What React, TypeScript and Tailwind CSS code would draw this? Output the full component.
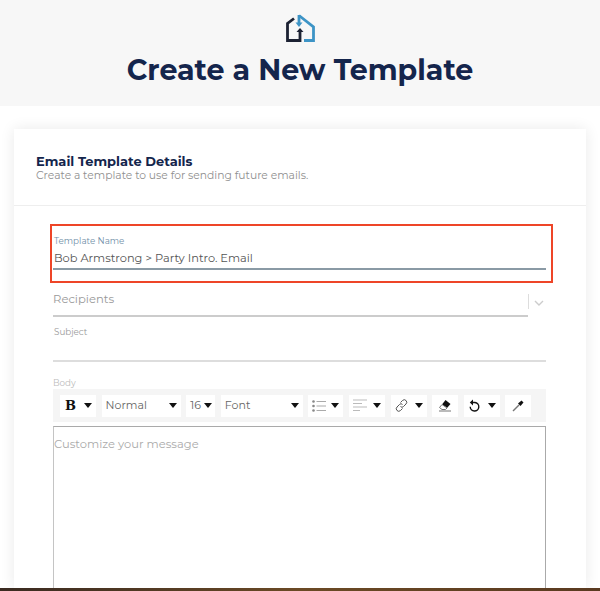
import { ReactNode } from "react";

const font = "font-['Montserrat','Inter','Noto_Sans',sans-serif]";

function Caret() {
  return (
    <svg width="8" height="5" viewBox="0 0 8 5" className="shrink-0">
      <path d="M0 0h8L4 5z" fill="#111" />
    </svg>
  );
}

function ToolBtn({
  w,
  children,
  caret = true,
  gap = "justify-between",
}: {
  w: string;
  children: ReactNode;
  caret?: boolean;
  gap?: string;
}) {
  return (
    <div className={`flex h-[22px] items-center bg-white px-[4px] ${gap} ${w}`}>
      {children}
      {caret && <Caret />}
    </div>
  );
}

function Logo() {
  return (
    <svg width="31" height="30" viewBox="284 13 31 30" fill="none">
      <path d="M293 18.5 L286.5 23.5 V40.5 H299 V30" stroke="#1c2233" strokeWidth="2.8" />
      <path d="M295.5 32 L299 28 L302.5 32 Z" fill="#1c2233" />
      <path d="M298 15 V24" stroke="#3d94c6" strokeWidth="2.8" />
      <path d="M294.5 22.5 L298 27 L301.5 22.5 Z" fill="#3d94c6" />
      <path d="M298 15.5 L312.5 27 V40.5 H303" stroke="#3d94c6" strokeWidth="2.8" />
    </svg>
  );
}

function ListIcon() {
  return (
    <svg width="14" height="12" viewBox="0 0 14 12" fill="none">
      <circle cx="1.5" cy="1.5" r="1.3" fill="#888" />
      <circle cx="1.5" cy="6" r="1.3" fill="#888" />
      <circle cx="1.5" cy="10.5" r="1.3" fill="#888" />
      <path d="M4.5 1.5H14M4.5 6H14M4.5 10.5H14" stroke="#aaa" />
    </svg>
  );
}

function AlignIcon() {
  return (
    <svg width="14" height="13" viewBox="0 0 14 13" fill="none">
      <path d="M0 1H14M0 4.5H9M0 8H14M0 11.5H7" stroke="#bbb" />
    </svg>
  );
}

function LinkIcon() {
  return (
    <svg width="13" height="13" viewBox="0 0 13 13" fill="none" stroke="#555">
      <path d="M5.5 3.5 L7.5 1.5 a2 2 0 0 1 3.5 3.5 L8.5 7.5 a2 2 0 0 1 -3 0" />
      <path d="M7.5 9.5 L5.5 11.5 a2 2 0 0 1 -3.5 -3.5 L4.5 5.5 a2 2 0 0 1 3 0" />
    </svg>
  );
}

function EraserIcon() {
  return (
    <svg width="14" height="13" viewBox="0 0 14 13" fill="none">
      <path d="M7.5 1 L12.5 5 L9 9 L4 5.5 Z" fill="#111" />
      <path d="M4 5.5 L9 9 L7.5 10.5 H4 L1.5 8.5 Z" fill="#fff" stroke="#777" />
      <path d="M1 12H13" stroke="#777" />
    </svg>
  );
}

function UndoIcon() {
  return (
    <svg width="13" height="13" viewBox="0 0 13 13" fill="none">
      <path d="M3.5 3.5 H7 a4.3 4.3 0 1 1 -4.8 4.3" stroke="#111" strokeWidth="1.4" />
      <path d="M5 0.5 L1.8 3.5 L5 6.5 Z" fill="#111" />
    </svg>
  );
}

function PenIcon() {
  return (
    <svg width="12" height="12" viewBox="0 0 12 12" fill="none">
      <path d="M1 11 L7 5" stroke="#777" strokeWidth="1.5" />
      <path d="M6 3.5 L8.5 6 L11.5 2.5 L9.5 0.5 Z" fill="#111" />
    </svg>
  );
}

export default function App() {
  return (
    <main className={`flex h-[591px] flex-col overflow-hidden bg-white ${font}`}>
      {/* Header */}
      <header className="flex h-[106px] shrink-0 flex-col items-center bg-[#f7f7f7] pt-[13px]">
        <Logo />
        <h1 className="mt-[9px] text-[28.5px] leading-[36px] font-bold text-[#14254c]">
          Create a New Template
        </h1>
      </header>

      {/* Card */}
      <section className="mx-[14px] mt-[23px] flex min-h-0 flex-1 flex-col bg-white shadow-[0_0_14px_rgba(0,0,0,0.09)]">
        <div className="h-[77px] shrink-0 border-b border-[#eeeeee] pt-[25px] pl-[22px]">
          <h2 className="text-[13px] leading-[15px] font-bold text-[#14254c]">
            Email Template Details
          </h2>
          <p className="text-[10.75px] leading-[14px] text-[#8f8f8f]">
            Create a template to use for sending future emails.
          </p>
        </div>

        <div className="flex min-h-0 flex-1 flex-col pt-[18px] pr-[40px] pl-[39px]">
          {/* Template name, marked in red */}
          <div className="-mr-[7px] -ml-[3px] h-[59px] shrink-0 border-2 border-[#ee4528] pt-[10px] pr-[5px] pl-[1px]">
            <label className="block pl-px text-[8.75px] leading-[11px] text-[#6f8ea8]">
              Template Name
            </label>
            <div className="h-[23px] border-b-2 border-[#8a9aa5] pt-[3px] pl-px text-[11.4px] leading-[16px] text-[#555555]">
              {"Bob Armstrong > Party Intro. Email"}
            </div>
          </div>

          {/* Recipients */}
          <div className="mt-[5px] flex h-[29px] shrink-0">
            <div className="flex-1 border-b-2 border-[#cccccc] pt-[3px] text-[11.6px] leading-[16px] text-[#999999]">
              Recipients
            </div>
            <div className="flex h-[27px] w-[18px] items-start pt-[6px]">
              <div className="mr-[5px] h-[15px] w-px bg-[#dddddd]" />
              <svg width="10" height="6" viewBox="0 0 10 6" fill="none" className="mt-[6px]">
                <path d="M1 1 L5 5 L9 1" stroke="#cccccc" strokeWidth="1.4" />
              </svg>
            </div>
          </div>

          {/* Subject */}
          <div className="mt-[9px] h-[36px] shrink-0 border-b-2 border-[#dddddd]">
            <label className="block pl-px text-[8.75px] leading-[12px] text-[#999999]">
              Subject
            </label>
          </div>

          {/* Body */}
          <label className="mt-[16px] block shrink-0 text-[8.75px] leading-[11px] text-[#bbbbbb]">
            Body
          </label>
          <div className="flex h-[33px] shrink-0 items-center gap-[5.6px] bg-[#f5f5f5] pl-[7px] text-[11px] text-[#666666]">
            <ToolBtn w="w-[36px]">
              <span className="ml-[1px] font-['DejaVu_Serif',serif] text-[13px] font-bold text-[#111111]">B</span>
            </ToolBtn>
            <ToolBtn w="w-[79px]">
              <span>Normal</span>
            </ToolBtn>
            <ToolBtn w="w-[29px]" gap="gap-[3px]">
              <span>16</span>
            </ToolBtn>
            <ToolBtn w="w-[82px]">
              <span>Font</span>
            </ToolBtn>
            <ToolBtn w="w-[35px]">
              <ListIcon />
            </ToolBtn>
            <ToolBtn w="w-[36px]">
              <AlignIcon />
            </ToolBtn>
            <ToolBtn w="w-[36px]">
              <LinkIcon />
            </ToolBtn>
            <ToolBtn w="w-[26px]" caret={false} gap="justify-center">
              <EraserIcon />
            </ToolBtn>
            <ToolBtn w="w-[36px]">
              <UndoIcon />
            </ToolBtn>
            <ToolBtn w="w-[26px]" caret={false} gap="justify-center">
              <PenIcon />
            </ToolBtn>
          </div>

          {/* Editor */}
          <div className="mt-[4px] min-h-0 flex-1 border border-b-0 border-[#aaaaaa] border-l-[#c4c4c4] pt-[9px] text-[11.5px] leading-[16px] text-[#aaaaaa]">
            Customize your message
          </div>
        </div>
      </section>

      {/* Strip of what lies below the capture */}
      <div className="h-[3px] shrink-0 bg-gradient-to-r from-[#3a2a20] via-[#6b4a25] to-[#5a3a20]" />
    </main>
  );
}
